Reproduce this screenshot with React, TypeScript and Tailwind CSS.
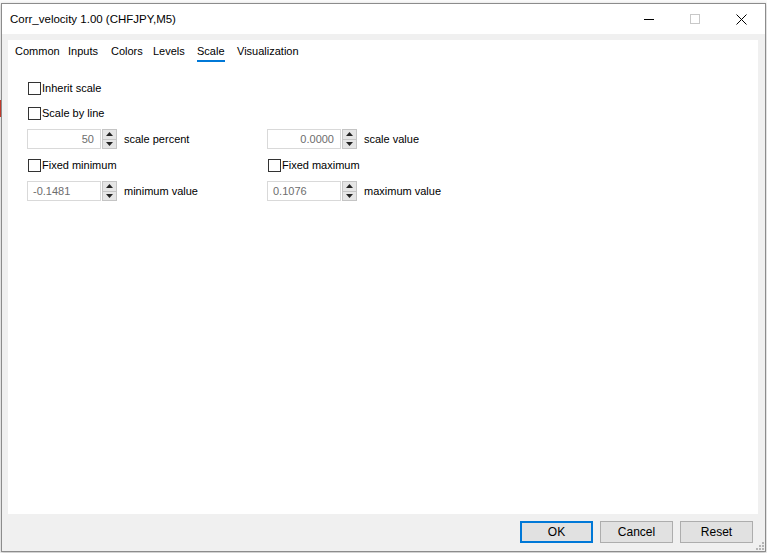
import React from 'react';

// tab label + the width of the slot it sits in
const TABS: [string, string][] = [
  ['Common', 'w-[53px]'],
  ['Inputs', 'w-[43px]'],
  ['Colors', 'w-[42px]'],
  ['Levels', 'w-[44px]'],
  ['Scale', 'w-[40px]'],
  ['Visualization', 'w-[80px]'],
];

const Check: React.FC<{ label: string }> = ({ label }) => (
  <div className="flex items-center h-[16px]">
    <span className="w-[13px] h-[13px] border border-[#333333] bg-white" />
    <span className="ml-[1px]">{label}</span>
  </div>
);

const Spin: React.FC<{ value: string; label: string; right?: boolean }> = ({ value, label, right }) => (
  <div className="flex items-center">
    <div
      className={`w-[74px] h-[20px] border border-[#d9d9d9] bg-white text-[#6d6d6d] flex items-center ${
        right ? 'justify-end pr-[6px]' : 'justify-start pl-[5px]'
      }`}
    >
      {value}
    </div>
    <div className="ml-[1px] w-[15px] h-[20px] flex flex-col border border-[#c4c4c4] bg-[#e5e5e5]">
      <div className="flex-1 flex items-center justify-center border-b border-[#c4c4c4]">
        <svg width="7" height="4" viewBox="0 0 7 4"><path d="M3.5 0L7 4H0z" fill="#222" /></svg>
      </div>
      <div className="flex-1 flex items-center justify-center">
        <svg width="7" height="4" viewBox="0 0 7 4"><path d="M0 0h7L3.5 4z" fill="#222" /></svg>
      </div>
    </div>
    <span className="ml-[7px]">{label}</span>
  </div>
);

const Btn: React.FC<{ label: string; primary?: boolean }> = ({ label, primary }) => (
  <button
    className={`w-[73px] h-[22px] bg-[#e1e1e1] flex items-center justify-center text-[12px] ${
      primary ? 'border-2 border-[#0078d7]' : 'border border-[#adadad]'
    }`}
  >
    {label}
  </button>
);

export default function App() {
  return (
    <div
      className="relative w-[767px] h-[553px] bg-[#fafafa] overflow-hidden text-[11px] text-black"
      style={{ fontFamily: '"Liberation Sans", Arial, sans-serif' }}
    >
      {/* bits of the window behind */}
      <div className="absolute left-0 top-[100px] w-[1px] h-[17px] bg-[#c0392b]" />

      <div className="ml-[1px] mt-[3px] w-[765px] h-[549px] border border-[#8c8c8c] bg-[#f0f0f0] flex flex-col shadow-[0_1px_3px_rgba(0,0,0,0.25)]">
        {/* Title bar */}
        <div className="h-[30px] bg-white flex items-center shrink-0">
          <span className="ml-[8px] mt-[1px] text-[11.5px]">Corr_velocity 1.00 (CHFJPY,M5)</span>
          <div className="ml-auto flex items-center h-full">
            <div className="w-[46px] h-full flex items-center justify-center">
              <div className="w-[10px] h-[1px] bg-black mr-[3px]" />
            </div>
            <div className="w-[46px] h-full flex items-center justify-center">
              <div className="w-[10px] h-[10px] border border-[#c8c8c8] mr-[2px]" />
            </div>
            <div className="w-[46px] h-full flex items-center justify-center">
              <svg width="11" height="11" viewBox="0 0 11 11" className="mr-[1px]">
                <path d="M0.5 0.5L10.5 10.5M10.5 0.5L0.5 10.5" stroke="#000" strokeWidth="1" />
              </svg>
            </div>
          </div>
        </div>

        {/* Panel */}
        <div className="mt-[6px] ml-[6px] mr-[7px] h-[474px] bg-white flex flex-col">
          <div className="h-[22px] flex items-end pl-[7px]">
            {TABS.map(([t, w]) => (
              <div key={t} className={`${w} shrink-0`}>
                <div className="inline-flex flex-col">
                  <span className="leading-[14px] mt-[1px]">{t}</span>
                  <div className={`mt-[2px] h-[2px] w-full ${t === 'Scale' ? 'bg-[#0078d7]' : 'bg-transparent'}`} />
                </div>
              </div>
            ))}
          </div>

          <div className="pl-[19px] pt-[18px] flex flex-col">
            <div className="pl-[1px]">
              <Check label="Inherit scale" />
            </div>
            <div className="pl-[1px] mt-[9px]">
              <Check label="Scale by line" />
            </div>
            <div className="mt-[8px] grid grid-cols-[240px_1fr]">
              <Spin value="50" label="scale percent" right />
              <Spin value="0.0000" label="scale value" right />
            </div>
            <div className="mt-[8px] grid grid-cols-[240px_1fr] pl-[1px]">
              <Check label="Fixed minimum" />
              <Check label="Fixed maximum" />
            </div>
            <div className="mt-[8px] grid grid-cols-[240px_1fr]">
              <Spin value="-0.1481" label="minimum value" />
              <Spin value="0.1076" label="maximum value" />
            </div>
          </div>
        </div>

        {/* Buttons */}
        <div className="flex-1 relative flex items-start justify-end pr-[12px] pt-[7px] gap-[7px]">
          <Btn label="OK" primary />
          <Btn label="Cancel" />
          <Btn label="Reset" />
          <svg className="absolute right-[1px] bottom-[1px]" width="8" height="8" viewBox="0 0 8 8">
            <g fill="#b5b5b5">
              <rect x="6" y="0" width="2" height="2" />
              <rect x="3" y="3" width="2" height="2" />
              <rect x="6" y="3" width="2" height="2" />
              <rect x="0" y="6" width="2" height="2" />
              <rect x="3" y="6" width="2" height="2" />
              <rect x="6" y="6" width="2" height="2" />
            </g>
          </svg>
        </div>
      </div>
    </div>
  );
}
